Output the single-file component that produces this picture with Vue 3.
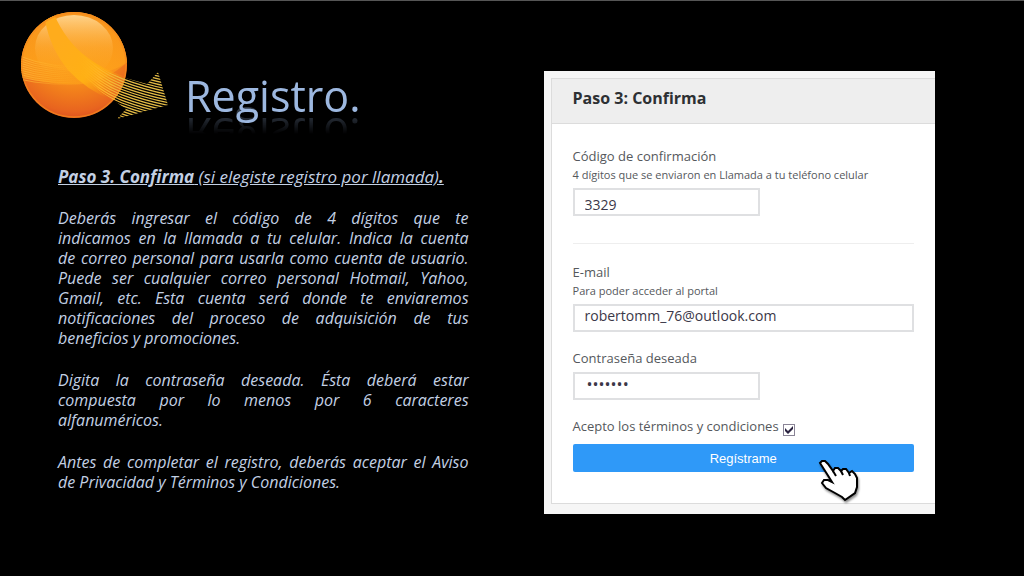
<script setup>
import { ref } from 'vue'

const code = ref('3329')
const email = ref('robertomm_76@outlook.com')
const password = ref('secreto')
const accepted = ref(true)

const paragraphs = [
  [
    'Deberás ingresar el código de 4 dígitos que te',
    'indicamos en la llamada a tu celular. Indica la cuenta',
    'de correo personal para usarla como cuenta de usuario.',
    'Puede ser cualquier correo personal Hotmail, Yahoo,',
    'Gmail, etc. Esta cuenta será donde te enviaremos',
    'notificaciones del proceso de adquisición de tus',
    'beneficios y promociones.'
  ],
  [
    'Digita la contraseña deseada. Ésta deberá estar',
    'compuesta por lo menos por 6 caracteres',
    'alfanuméricos.'
  ],
  [
    'Antes de completar el registro, deberás aceptar el Aviso',
    'de Privacidad y Términos y Condiciones.'
  ]
]

const arrowLines = Array.from({ length: 24 }, (_, i) => {
  const y = Math.round((i - 7) * 27) / 10
  return `M76 ${43 + y} Q98 ${67 + y} 122 ${76 + y} T172 ${90 + y}`
})
const waveLines = Array.from({ length: 11 }, (_, i) => {
  const y = i * 2.3
  return `M19 ${56 + y} Q48 ${68 + y * 0.8} 98 ${68 + y * 0.7}`
})
</script>

<template>
  <main class="slide">
    <section class="info">
      <header class="heading">
        <svg class="logo" viewBox="20 10 150 110" aria-hidden="true">
          <defs>
            <radialGradient id="base" cx="0.5" cy="0.3" r="0.75">
              <stop offset="0" stop-color="#ffac1c" />
              <stop offset="0.5" stop-color="#f68a1a" />
              <stop offset="0.85" stop-color="#e8641f" />
              <stop offset="1" stop-color="#d84820" />
            </radialGradient>
            <linearGradient id="upper" x1="0" y1="0" x2="0" y2="1">
              <stop offset="0" stop-color="#f7941d" />
              <stop offset="1" stop-color="#ffa41a" />
            </linearGradient>
            <linearGradient id="gloss" x1="0" y1="0" x2="0" y2="1">
              <stop offset="0" stop-color="#ffd690" stop-opacity="0.95" />
              <stop offset="0.5" stop-color="#fdb040" stop-opacity="0.4" />
              <stop offset="1" stop-color="#fca41c" stop-opacity="0" />
            </linearGradient>
            <linearGradient id="band" gradientUnits="userSpaceOnUse" x1="60" y1="40" x2="112" y2="92">
              <stop offset="0" stop-color="#ffac1c" />
              <stop offset="0.6" stop-color="#ffb014" />
              <stop offset="1" stop-color="#ff9f14" stop-opacity="0" />
            </linearGradient>
            <linearGradient id="stroke" gradientUnits="userSpaceOnUse" x1="80" y1="0" x2="130" y2="0">
              <stop offset="0" stop-color="#ffb41a" stop-opacity="0" />
              <stop offset="0.4" stop-color="#ffb727" />
              <stop offset="1" stop-color="#e3bb45" />
            </linearGradient>
            <linearGradient id="wave" gradientUnits="userSpaceOnUse" x1="20" y1="0" x2="84" y2="0">
              <stop offset="0" stop-color="#ffb83a" />
              <stop offset="1" stop-color="#ffb020" stop-opacity="0" />
            </linearGradient>
            <clipPath id="ball"><circle cx="74" cy="65" r="53" /></clipPath>
            <clipPath id="arrow">
              <path d="M76 48 Q96 69 118 76 L147 84 L158 72 L168 105 L117 119 L126 109 L112 99 Q94 89 76 68Z" />
            </clipPath>
          </defs>
          <circle cx="74" cy="65" r="53" fill="url(#base)" />
          <g clip-path="url(#ball)">
            <path d="M20 10H130V60Q108 80 82 84Q48 86 20 76Z" fill="url(#upper)" opacity="0.6" />
            <path d="M20 10H130V60Q108 78 76 72Q48 68 20 56Z" fill="url(#upper)" opacity="0.7" />
            <ellipse cx="74" cy="48" rx="39" ry="33" fill="url(#gloss)" />
            <path d="M43 18L54 14Q66 42 88 58Q104 70 126 77L114 101Q86 90 68 70Q50 48 45 20Z" fill="url(#band)" />
            <path v-for="d in waveLines" :key="d" :d="d" fill="none" stroke="url(#wave)" stroke-width="0.8" />
          </g>
          <circle cx="74" cy="65" r="52" fill="none" stroke="#f58a1c" stroke-width="1.4" opacity="0.7" />
          <g clip-path="url(#arrow)">
            <path v-for="d in arrowLines" :key="d" :d="d" fill="none" stroke="url(#stroke)" stroke-width="1.3" />
          </g>
        </svg>
        <h1 class="title">Registro.</h1>
      </header>

      <div class="copy">
        <p class="lead"><strong>Paso 3. Confirma</strong> (si elegiste registro por llamada)<strong>.</strong></p>
        <p v-for="(lines, i) in paragraphs" :key="i">
          <span v-for="line in lines" :key="line" class="line">{{ line }}</span>
        </p>
      </div>
    </section>

    <section class="panel">
      <form class="card" @submit.prevent>
        <h2 class="card-title">Paso 3: Confirma</h2>
        <div class="fields">
          <div class="field">
            <label for="code">Código de confirmación</label>
            <small id="code-hint">4 dígitos que se enviaron en Llamada a tu teléfono celular</small>
            <input id="code" v-model="code" class="box half low" type="text" aria-describedby="code-hint" />
          </div>
          <hr />
          <div class="field">
            <label for="email">E-mail</label>
            <small id="email-hint">Para poder acceder al portal</small>
            <input id="email" v-model="email" class="box high" type="email" aria-describedby="email-hint" />
          </div>
          <div class="field">
            <label for="password">Contraseña deseada</label>
            <input id="password" v-model="password" class="box half secret" type="password" />
          </div>
          <div class="accept">
            <label for="terms">Acepto los términos y condiciones</label>
            <span class="tick">
              <input id="terms" v-model="accepted" type="checkbox" />
              <svg v-if="accepted" viewBox="0 0 12 12" aria-hidden="true">
                <path d="M2 4L5 7L10 2V5L5 10L2 7Z" fill="#2b2340" />
              </svg>
            </span>
          </div>
          <div class="action">
            <button type="submit">Regístrame</button>
            <svg class="pointer" viewBox="0 0 46 46" aria-hidden="true">
              <path
                d="M2 3L4 1H7L10 4L15 11L17 8H20L23 11L25 9H28L31 13L34 11L37 14L39 18V27L37 33L27 40L24 37L17 33L8 28L4 23L6 20H10L14 22L9 14Z"
                fill="#fff" stroke="#000" stroke-width="2" stroke-linejoin="miter"
              />
              <path d="M15 11L18 16M23 11L25 15M31 13L32 16" fill="none" stroke="#000" stroke-width="2" />
            </svg>
          </div>
        </div>
      </form>
    </section>
  </main>
</template>

<style>
body {
  background: #000;
}
</style>

<style scoped>
.slide {
  box-sizing: border-box;
  min-height: 100vh;
  display: grid;
  grid-template-columns: 448fr 391fr;
  column-gap: 75px;
  align-items: start;
  padding: 0 89px 0 20px;
  border-top: 1px solid #555;
  background: #000;
  font-family: "Open Sans", "Noto Sans", sans-serif;
}
.heading {
  display: flex;
  align-items: flex-start;
  gap: 15px;
  padding-top: 9px;
}
.logo {
  width: 150px;
  height: 110px;
  flex: none;
}
.title {
  margin: 56px 0 0;
  font-size: 43px;
  line-height: 60px;
  font-weight: 400;
  color: #9db8e0;
  -webkit-box-reflect: below -22px linear-gradient(transparent 50%, rgba(255, 255, 255, 0.3) 85%);
}
.copy {
  margin: 41px 0 0 38px;
  color: #c3d0e4;
  font-size: 16px;
  line-height: 20px;
  font-style: italic;
}
.copy p {
  margin: 0 0 22px;
}
.copy .lead {
  margin-bottom: 21px;
  font-size: 17px;
  text-decoration: underline;
}
.line {
  display: block;
  text-align: justify;
  text-align-last: justify;
}
.line:last-child {
  text-align-last: left;
}
.panel {
  margin-top: 70px;
  padding: 7px 0 10px 7px;
  background: #f6f6f6;
}
.card {
  border: 1px solid #dcdcdc;
  border-right: 0;
  background: #fff;
}
.card-title {
  margin: 0;
  padding: 8px 21px 14px;
  border-bottom: 1px solid #dcdcdc;
  background: #eee;
  color: #2d3033;
  font-size: 16px;
  line-height: 22px;
  font-weight: 700;
}
.fields {
  display: flex;
  flex-direction: column;
  gap: 16px;
  padding: 22px 21px 31px;
  color: #55585c;
  font-size: 13px;
  line-height: 20px;
}
.field {
  display: flex;
  flex-direction: column;
  align-items: flex-start;
}
small {
  font-size: 11px;
  line-height: 18px;
}
.box {
  box-sizing: border-box;
  width: 100%;
  height: 28px;
  margin: 4px 0 0;
  border: 2px solid #dfe0e2;
  border-radius: 0;
  background: #fff;
  color: #3b3848;
  font-family: inherit;
  font-size: 14px;
  line-height: 20px;
}
.half {
  width: 55%;
}
.low {
  padding: 4px 10px 0;
}
.high {
  padding: 0 10px 6px;
}
.secret {
  padding: 0 12px 4px;
  font-size: 16px;
}
hr {
  width: 100%;
  margin: 11px 0 2px;
  border: 0;
  border-top: 1px solid #eee;
}
.accept {
  display: flex;
  align-items: flex-end;
  gap: 4px;
}
.tick {
  display: grid;
  width: 12px;
  height: 12px;
}
.tick > * {
  grid-area: 1 / 1;
}
.tick input {
  appearance: none;
  width: 12px;
  height: 12px;
  margin: 0;
  border: 1px solid #8a8496;
  background: #fff;
}
.tick svg {
  width: 12px;
  height: 12px;
  pointer-events: none;
}
.action {
  position: relative;
  margin-top: -8px;
}
button {
  display: block;
  width: 100%;
  height: 28px;
  padding: 0;
  border: 0;
  border-radius: 2px;
  background: #2f99f8;
  color: #fff;
  font-family: "Liberation Sans", Arial, sans-serif;
  font-size: 13px;
}
.pointer {
  position: absolute;
  top: 16px;
  left: 72%;
  width: 46px;
  height: 46px;
  filter: drop-shadow(1px 2px 1px rgba(0, 0, 0, 0.45));
  pointer-events: none;
}
</style>
